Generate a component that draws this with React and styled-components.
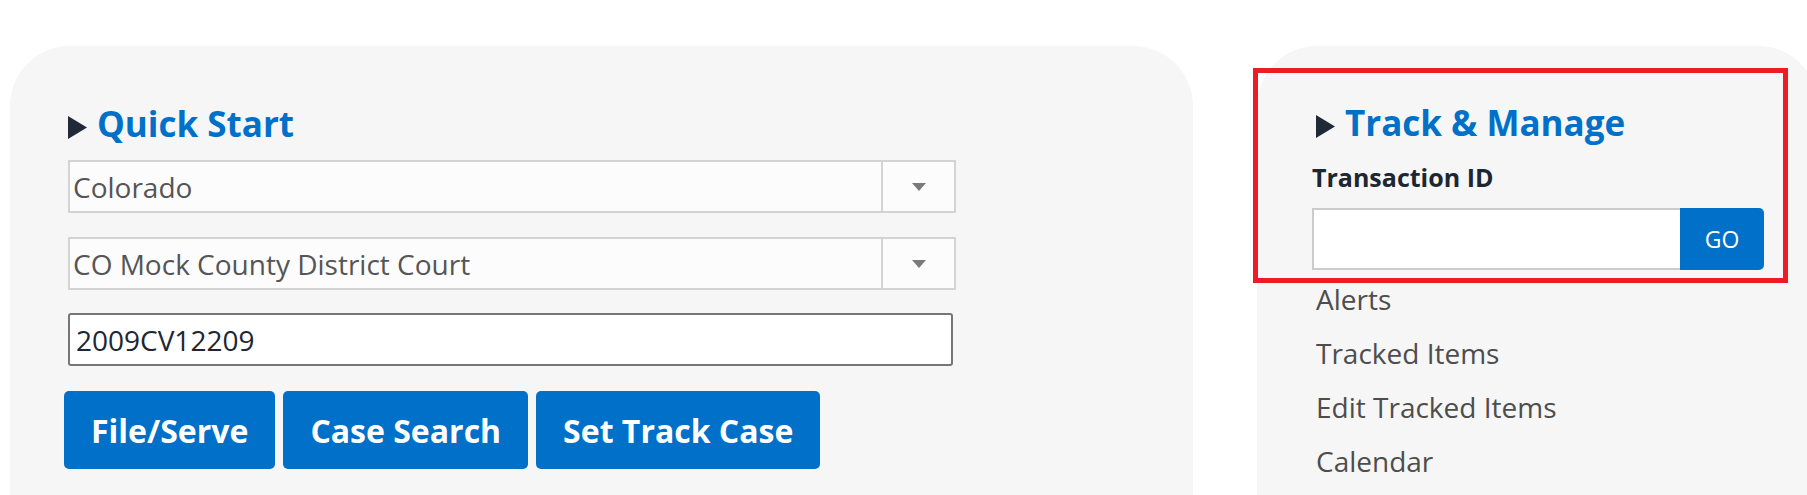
import React from "react";
import styled, { createGlobalStyle } from "styled-components";

const GlobalStyle = createGlobalStyle`
  html, body {
    margin: 0;
    padding: 0;
    background: #ffffff;
    overflow: hidden;
  }
  body {
    font-family: "Open Sans", "Liberation Sans", sans-serif;
  }
`;

const BLUE = "#0070c9";

const trackLinks = ["Alerts", "Tracked Items", "Edit Tracked Items", "Calendar"];

const Caret = () => (
  <svg width="19" height="23" viewBox="0 0 19 23" aria-hidden="true">
    <polygon points="0,0 19,11.5 0,23" fill="#1f2937" />
  </svg>
);

const SelectBox = ({ value }) => (
  <StyledSelect>
    <SelectValue>{value}</SelectValue>
    <SelectArrowCell>
      <SelectArrow />
    </SelectArrowCell>
  </StyledSelect>
);

const App = () => {
  return (
    <>
      <GlobalStyle />
      <StyledPage>
        <StyledPanel $width={1183} $padLeft={54}>
          <StyledHeading>
            <Caret />
            <span>Quick Start</span>
          </StyledHeading>
          <SelectBox value="Colorado" />
          <SelectBox value="CO Mock County District Court" />
          <StyledCaseInput defaultValue="2009CV12209" />
          <StyledButtonRow>
            <StyledActionButton>File/Serve</StyledActionButton>
            <StyledActionButton>Case Search</StyledActionButton>
            <StyledActionButton>Set Track Case</StyledActionButton>
          </StyledButtonRow>
        </StyledPanel>

        <StyledPanel $width={561} $padLeft={0} $padTop={22}>
          <StyledTrackBox>
            <StyledHeading>
              <Caret />
              <span>Track &amp; Manage</span>
            </StyledHeading>
            <StyledFieldLabel>Transaction ID</StyledFieldLabel>
            <StyledGoRow>
              <StyledGoInput />
              <StyledGoButton>GO</StyledGoButton>
            </StyledGoRow>
          </StyledTrackBox>
          <StyledLinkList>
            {trackLinks.map((e) => (
              <StyledLink key={e}>{e}</StyledLink>
            ))}
          </StyledLinkList>
        </StyledPanel>
      </StyledPage>
    </>
  );
};

export default App;

const StyledPage = styled.div`
  display: flex;
  align-items: flex-start;
  gap: 64px;
  height: 495px;
  overflow: hidden;
  padding: 46px 0 0 10px;
  box-sizing: border-box;
`;

const StyledPanel = styled.section`
  flex: 0 0 ${(props) => props.$width}px;
  width: ${(props) => props.$width}px;
  min-height: 520px;
  box-sizing: border-box;
  background: #f6f6f6;
  border-radius: 60px;
  padding: ${(props) => props.$padTop ?? 57}px 0 0 ${(props) => props.$padLeft}px;
`;

const StyledHeading = styled.h2`
  display: flex;
  align-items: flex-end;
  gap: 10px;
  margin: 0 0 0 4px;
  font-size: 35px;
  line-height: 42px;
  font-weight: 700;
  color: ${BLUE};

  svg {
    flex: none;
    margin-bottom: 6px;
  }
`;

const StyledSelect = styled.div`
  display: grid;
  grid-template-columns: 1fr 73px;
  width: 888px;
  height: 53px;
  margin: 15px 0 0 4px;
  box-sizing: border-box;
  border: 2px solid #d3d3d3;
  background: #fcfcfc;

  & + & {
    margin-top: 24px;
  }
`;

const SelectValue = styled.div`
  display: flex;
  align-items: center;
  padding-left: 3px;
  font-size: 28px;
  color: #555555;
  white-space: nowrap;
`;

const SelectArrowCell = styled.div`
  display: flex;
  align-items: center;
  justify-content: center;
  border-left: 2px solid #d3d3d3;
`;

const SelectArrow = styled.span`
  width: 0;
  height: 0;
  border-left: 7px solid transparent;
  border-right: 7px solid transparent;
  border-top: 8px solid #7a7a7a;
  filter: blur(0.4px);
`;

const StyledCaseInput = styled.input`
  display: block;
  width: 885px;
  height: 53px;
  margin: 23px 0 0 4px;
  box-sizing: border-box;
  border: 2px solid #767676;
  border-radius: 3px;
  background: #ffffff;
  padding: 0 6px;
  font-family: "Open Sans", "Liberation Sans", sans-serif;
  font-size: 28px;
  color: #1c2733;
  outline: none;
`;

const StyledButtonRow = styled.div`
  display: flex;
  gap: 8px;
  margin-top: 25px;
`;

const StyledActionButton = styled.button`
  height: 78px;
  padding: 0 27px;
  border: none;
  border-radius: 5px;
  background: ${BLUE};
  color: #ffffff;
  font-family: "Open Sans", "Liberation Sans", sans-serif;
  font-size: 32px;
  font-weight: 700;
  cursor: pointer;
`;

const StyledTrackBox = styled.div`
  width: 535px;
  margin-left: -4px;
  box-sizing: border-box;
  border: 5px solid #ed1c24;
  padding: 29px 0 8px 54px;
`;

const StyledFieldLabel = styled.div`
  margin-top: 18px;
  font-size: 25px;
  line-height: 30px;
  font-weight: 700;
  color: #1c2733;
`;

const StyledGoRow = styled.div`
  display: flex;
  width: 452px;
  height: 62px;
  margin-top: 16px;
`;

const StyledGoInput = styled.input`
  flex: 1;
  min-width: 0;
  box-sizing: border-box;
  border: 2px solid #cccccc;
  border-right: none;
  background: #ffffff;
  outline: none;
`;

const StyledGoButton = styled.button`
  flex: 0 0 84px;
  border: none;
  border-radius: 0 5px 5px 0;
  background: ${BLUE};
  color: #ffffff;
  font-family: "Open Sans", "Liberation Sans", sans-serif;
  font-size: 23px;
  cursor: pointer;
`;

const StyledLinkList = styled.nav`
  display: flex;
  flex-direction: column;
  gap: 18px;
  margin-top: -2px;
  padding-left: 59px;
`;

const StyledLink = styled.a`
  font-size: 28px;
  line-height: 36px;
  color: #4d4d4d;
  text-decoration: none;
  cursor: pointer;
`;
